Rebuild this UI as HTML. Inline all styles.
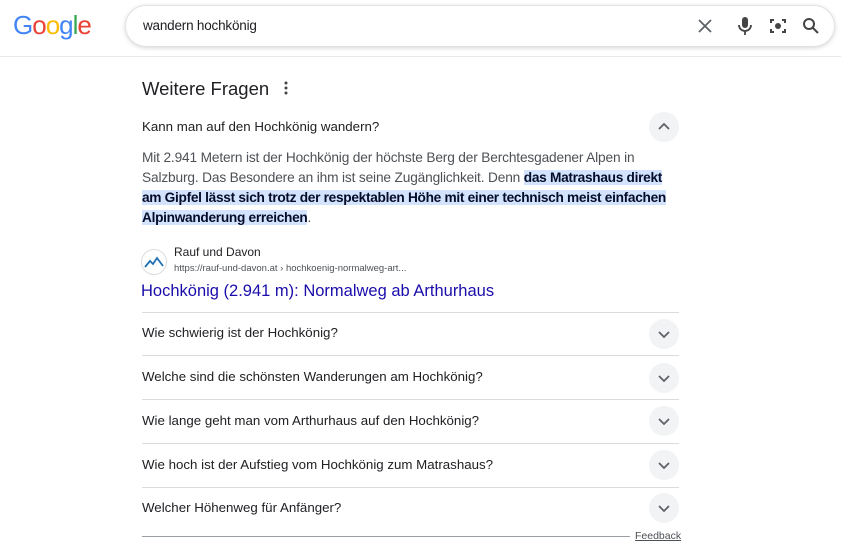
<!DOCTYPE html>
<html><head><meta charset="utf-8"><style>
body{margin:0;width:841px;height:543px;overflow:hidden;background:#fff;font-family:"Liberation Sans",Arial,sans-serif;position:relative}
.hdr{position:absolute;left:0;top:0;width:841px;height:56px;border-bottom:1px solid #e8eaed}
.logo{position:absolute;left:13px;top:10px;font-size:26px;letter-spacing:-1px;font-family:"Liberation Sans",sans-serif}
.box{position:absolute;left:125px;top:5px;width:708px;height:40px;border:1px solid #dfe1e5;border-radius:22px;box-shadow:0 1px 4px rgba(32,33,36,.18)}
.q{position:absolute;left:17px;top:12px;font-size:13.5px;letter-spacing:-0.2px;color:#202124}
.abs{position:absolute}
h2{position:absolute;left:142px;top:78px;margin:0;font-weight:normal;font-size:18.5px;color:#202124}
.row{position:absolute;left:142px;width:537px;font-size:13.3px;color:#202124}
.chev{position:absolute;left:649px;width:30px;height:30px;border-radius:50%;background:#f1f3f4}
.chev svg{position:absolute;left:7px;top:7px}
.sep{position:absolute;left:142px;width:537px;height:1px;background:#dadce0}
.body{position:absolute;left:142px;top:148px;width:540px;font-size:13.7px;letter-spacing:-0.15px;line-height:20px;color:#4d5156}
.hl{background:#d3e3fd;color:#040c28;font-weight:bold;letter-spacing:-0.3px}
</style></head><body>
<div class="hdr">
<div class="logo"><span style="color:#4285f4">G</span><span style="color:#ea4335">o</span><span style="color:#fbbc05">o</span><span style="color:#4285f4">g</span><span style="color:#34a853">l</span><span style="color:#ea4335">e</span></div>
<div class="box"><div class="q">wandern hochkönig</div>
<svg class="abs" style="left:572px;top:13px" width="14" height="14" viewBox="0 0 14 14"><path d="M1 1L13 13M13 1L1 13" stroke="#5f6368" stroke-width="1.8"/></svg>
<svg class="abs" style="left:611px;top:10px" width="16" height="20" viewBox="0 0 16 20"><rect x="5" y="1" width="6" height="11" rx="3" fill="#444"/><path d="M2 9a6 6 0 0 0 12 0M8 15v4" stroke="#444" stroke-width="1.8" fill="none"/></svg>
<svg class="abs" style="left:643px;top:11px" width="18" height="18" viewBox="0 0 18 18"><path d="M2 6V3h3M13 3h3v3M16 12v3h-3M5 15H2v-3" stroke="#444" stroke-width="2" fill="none"/><circle cx="9" cy="9" r="3" fill="#444"/></svg>
<svg class="abs" style="left:676px;top:11px" width="18" height="18" viewBox="0 0 18 18"><circle cx="7" cy="7" r="5" stroke="#444" stroke-width="2" fill="none"/><path d="M11 11l5 5" stroke="#444" stroke-width="2"/></svg>
</div></div>
<h2>Weitere Fragen</h2>
<svg class="abs" style="left:284px;top:81px" width="4" height="14"><circle cx="2" cy="2" r="1.5" fill="#444"/><circle cx="2" cy="7" r="1.5" fill="#444"/><circle cx="2" cy="12" r="1.5" fill="#444"/></svg>
<div class="row" style="top:119px">Kann man auf den Hochkönig wandern?</div>
<div class="chev" style="top:112px"><svg width="16" height="16"><path d="M3 10l5-5 5 5" stroke="#5f6368" stroke-width="1.8" fill="none"/></svg></div>
<div class="body">Mit 2.941 Metern ist der Hochkönig der höchste Berg der Berchtesgadener Alpen in Salzburg. Das Besondere an ihm ist seine Zugänglichkeit. Denn <span class="hl">das Matrashaus direkt am Gipfel lässt sich trotz der respektablen Höhe mit einer technisch meist einfachen Alpinwanderung erreichen</span>.</div>
<div class="abs" style="left:141px;top:249px;width:24px;height:24px;border-radius:50%;border:1px solid #dadce0;background:#fff"><svg width="24" height="24"><path d="M3 17l5-6 3 3 4-6 6 8" stroke="#1f6fb2" stroke-width="1.8" fill="none"/></svg></div>
<div class="abs" style="left:174px;top:245px;font-size:12px;color:#202124">Rauf und Davon</div>
<div class="abs" style="left:174px;top:263px;font-size:9.5px;color:#4d5156">https://rauf-und-davon.at › hochkoenig-normalweg-art...</div>
<div class="abs" style="left:141px;top:282px;font-size:16.5px;color:#1a0dab">Hochkönig (2.941 m): Normalweg ab Arthurhaus</div>
<div class="sep" style="top:312px"></div>
<div class="row" style="top:325px">Wie schwierig ist der Hochkönig?</div>
<div class="chev" style="top:319px"><svg width="16" height="16"><path d="M3 6l5 5 5-5" stroke="#5f6368" stroke-width="1.8" fill="none"/></svg></div>
<div class="sep" style="top:355px"></div>
<div class="row" style="top:369px">Welche sind die schönsten Wanderungen am Hochkönig?</div>
<div class="chev" style="top:363px"><svg width="16" height="16"><path d="M3 6l5 5 5-5" stroke="#5f6368" stroke-width="1.8" fill="none"/></svg></div>
<div class="sep" style="top:399px"></div>
<div class="row" style="top:413px">Wie lange geht man vom Arthurhaus auf den Hochkönig?</div>
<div class="chev" style="top:406px"><svg width="16" height="16"><path d="M3 6l5 5 5-5" stroke="#5f6368" stroke-width="1.8" fill="none"/></svg></div>
<div class="sep" style="top:443px"></div>
<div class="row" style="top:457px">Wie hoch ist der Aufstieg vom Hochkönig zum Matrashaus?</div>
<div class="chev" style="top:450px"><svg width="16" height="16"><path d="M3 6l5 5 5-5" stroke="#5f6368" stroke-width="1.8" fill="none"/></svg></div>
<div class="sep" style="top:487px"></div>
<div class="row" style="top:500px">Welcher Höhenweg für Anfänger?</div>
<div class="chev" style="top:493px"><svg width="16" height="16"><path d="M3 6l5 5 5-5" stroke="#5f6368" stroke-width="1.8" fill="none"/></svg></div>
<div class="abs" style="left:142px;top:536px;width:488px;height:1px;background:#9aa0a6"></div>
<div class="abs" style="left:635px;top:530px;font-size:10.5px;color:#4d5156;text-decoration:underline">Feedback</div>
</body></html>
